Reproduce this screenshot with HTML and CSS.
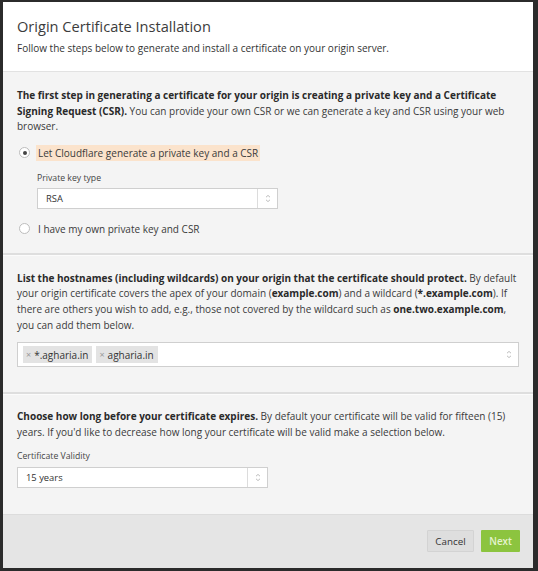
FILE: index.html
```html
<!DOCTYPE html>
<html>
<head>
<meta charset="utf-8">
<link rel="stylesheet" href="styles.css">
</head>
<body>
<div class="modal">
  <div class="header">
    <h1 class="title">Origin Certificate Installation</h1>
    <p class="subtitle">Follow the steps below to generate and install a certificate on your origin server.</p>
  </div>

  <div class="section s1">
    <p class="para"><b>The first step in generating a certificate for your origin is creating a private key and a Certificate Signing Request (CSR).</b> You can provide your own CSR or we can generate a key and CSR using your web browser.</p>
    <div class="radio-row checked-row">
      <span class="radio checked"></span>
      <span class="radio-label hl">Let Cloudflare generate a private key and a CSR</span>
    </div>
    <div class="sub">
      <div class="field-label">Private key type</div>
      <div class="select select-rsa">
        <span class="select-value">RSA</span>
        <span class="select-arrow"><svg width="6" height="9" viewBox="0 0 6 9"><path d="M1 3.2 L3 1.4 L5 3.2" fill="none" stroke="#b5b5b5" stroke-width="0.9"/><path d="M1 5.8 L3 7.6 L5 5.8" fill="none" stroke="#b5b5b5" stroke-width="0.9"/></svg></span>
      </div>
    </div>
    <div class="radio-row second">
      <span class="radio"></span>
      <span class="radio-label">I have my own private key and CSR</span>
    </div>
  </div>

  <div class="section s2">
    <p class="para"><b>List the hostnames (including wildcards) on your origin that the certificate should protect.</b> By default your origin certificate covers the apex of your domain (<b>example.com</b>) and a wildcard (<b>*.example.com</b>). If there are others you wish to add, e.g., those not covered by the wildcard such as <b>one.two.example.com</b>, you can add them below.</p>
    <div class="tag-input">
      <span class="tag"><span class="tag-x">×</span>*.agharia.in</span>
      <span class="tag"><span class="tag-x">×</span>agharia.in</span>
      <span class="tag-arrow"><svg width="6" height="9" viewBox="0 0 6 9"><path d="M1 3.2 L3 1.4 L5 3.2" fill="none" stroke="#b5b5b5" stroke-width="0.9"/><path d="M1 5.8 L3 7.6 L5 5.8" fill="none" stroke="#b5b5b5" stroke-width="0.9"/></svg></span>
    </div>
  </div>

  <div class="section s3">
    <p class="para"><b>Choose how long before your certificate expires.</b> By default your certificate will be valid for fifteen (15) years. If you'd like to decrease how long your certificate will be valid make a selection below.</p>
    <div class="field-label l3">Certificate Validity</div>
    <div class="select select-years">
      <span class="select-value">15 years</span>
      <span class="select-arrow"><svg width="6" height="9" viewBox="0 0 6 9"><path d="M1 3.2 L3 1.4 L5 3.2" fill="none" stroke="#b5b5b5" stroke-width="0.9"/><path d="M1 5.8 L3 7.6 L5 5.8" fill="none" stroke="#b5b5b5" stroke-width="0.9"/></svg></span>
    </div>
  </div>

  <div class="footer">
    <button class="btn btn-cancel">Cancel</button>
    <button class="btn btn-next">Next</button>
  </div>
</div>
</body>
</html>
```

FILE: styles.css
```css
html, body {
  margin: 0;
  padding: 0;
}
body {
  background: #2b2b2b;
  font-family: "Open Sans", "DejaVu Sans", sans-serif;
  color: #3a3a3a;
  padding: 2px 5px 3px 3px;
  width: 530px;
}
.modal {
  width: 530px;
  background: #f4f4f4;
  display: flex;
  flex-direction: column;
}
.header {
  background: #ffffff;
  padding: 14px 14px 15px 14px;
  border-bottom: 1px solid #e2e2e2;
}
.title {
  margin: 0;
  font-size: 14.6px;
  font-weight: 400;
  line-height: 20px;
  color: #3c3c3c;
}
.subtitle {
  margin: 5px 0 0 0;
  font-size: 10px;
  line-height: 15px;
  color: #333;
}
.section {
  padding: 16px 14px 16px 14px;
  border-top: 2px solid #dedede;
  box-shadow: inset 0 1px 0 #fbfbfb;
}
.s1 {
  border-top: none;
  box-shadow: none;
  padding-bottom: 16px;
}
.s2 {
  padding-bottom: 25px;
}
.s3 {
  padding-top: 15px;
  padding-bottom: 26px;
}
.para {
  margin: 0;
  font-size: 10px;
  line-height: 15.6px;
  color: #3a3a3a;
}
.para b {
  color: #2a2a2a;
  font-weight: 700;
}
.radio-row {
  display: flex;
  align-items: center;
  height: 16px;
  margin-top: 10px;
}
.radio-row.second {
  margin-top: 12px;
}
.radio {
  width: 9px;
  height: 9px;
  border: 1px solid #bdbdbd;
  border-radius: 50%;
  background: #fff;
  margin-left: 2px;
  display: flex;
  align-items: center;
  justify-content: center;
  flex: none;
}
.radio.checked::after {
  content: "";
  width: 4px;
  height: 4px;
  border-radius: 50%;
  background: #444;
}
.radio-label {
  margin-left: 6px;
  font-size: 10px;
  line-height: 16px;
  padding: 0 2px;
  color: #3a3a3a;
}
.radio-label.hl {
  background: #fbe3cc;
}
.sub {
  padding-left: 20px;
  margin-top: 10px;
}
.field-label {
  font-size: 8.7px;
  line-height: 14px;
  color: #444;
}
.l3 {
  margin-top: 9px;
}
.select {
  margin-top: 3px;
  height: 19px;
  border: 1px solid #cfcfcf;
  background: #fff;
  display: flex;
  align-items: center;
}
.select-rsa {
  width: 239px;
}
.select-years {
  width: 249px;
  margin-top: 4px;
}
.select-value {
  flex: 1;
  font-size: 9.4px;
  padding-left: 8px;
  color: #333;
}
.select-arrow {
  width: 19px;
  height: 100%;
  border-left: 1px solid #dcdcdc;
  display: flex;
  align-items: center;
  justify-content: center;
}
.tag-input {
  margin-top: 9px;
  height: 23px;
  border: 1px solid #cfcfcf;
  background: #fff;
  display: flex;
  align-items: center;
  padding-left: 5px;
  gap: 4px;
}
.tag {
  background: #e3e3e3;
  height: 17px;
  display: flex;
  align-items: center;
  padding: 0 4px 0 3px;
  font-size: 10px;
  color: #333;
}
.tag-x {
  color: #999;
  font-size: 9px;
  margin-right: 3px;
}
.tag-arrow {
  margin-left: auto;
  margin-right: 6px;
  display: flex;
}
.footer {
  background: #e5e5e5;
  border-top: 1px solid #dcdcdc;
  padding: 15px 13px 16px 0;
  display: flex;
  justify-content: flex-end;
  gap: 7px;
}
.btn {
  font-family: "Open Sans", "DejaVu Sans", sans-serif;
  font-size: 9.8px;
  height: 22px;
  border: none;
  border-radius: 1px;
  padding: 0;
  margin: 0;
}
.btn-cancel {
  width: 47px;
  background: #dedede;
  border: 1px solid #d3d3d3;
  color: #333;
}
.btn-next {
  width: 39px;
  background: #8cc43f;
  color: #e6f3cf;
  font-weight: 600;
}
```
